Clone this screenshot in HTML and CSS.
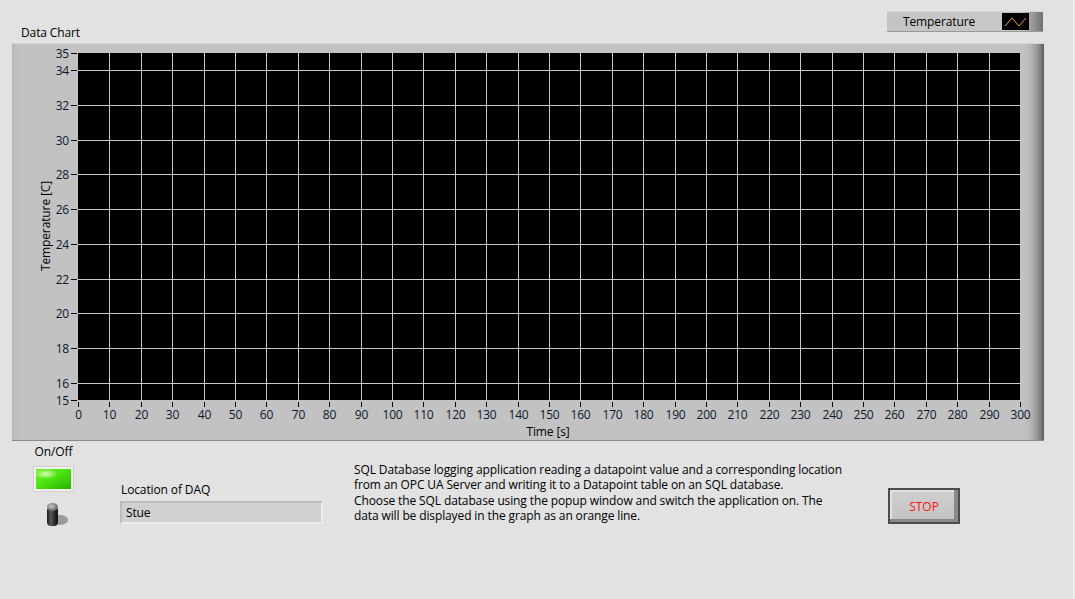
FILE: index.html
```html
<!DOCTYPE html>
<html>
<head>
<meta charset="utf-8">
<link rel="stylesheet" href="styles.css">
</head>
<body>
<div class="panel">
  <div class="top-row">
    <div class="chart-label">Data Chart</div>
    <div class="legend">
      <span class="legend-name">Temperature</span>
      <span class="legend-swatch">
        <svg width="27" height="17" viewBox="0 0 27 17"><polyline points="3,13 10,5 17,13 24,5" fill="none" stroke="#f0a020" stroke-width="1"/></svg>
      </span>
    </div>
  </div>
  <div class="chart-frame">
    <svg class="chart-svg" width="1032" height="398" viewBox="0 0 1032 398">
      <rect x="66" y="9" width="942" height="347" fill="#000"/>
      <g id="grid" stroke="#c8c8c8" stroke-width="1"></g>
      <g id="ticks" stroke="#000" stroke-width="1"></g>
      <g id="ylabels" class="tick-text" text-anchor="end"></g>
      <g id="xlabels" class="tick-text" text-anchor="middle"></g>
      <text class="axis-title" x="536" y="392" text-anchor="middle">Time [s]</text>
      <text class="axis-title" transform="translate(38 182) rotate(-90)" text-anchor="middle">Temperature [C]</text>
    </svg>
  </div>
  <div class="bottom-row">
    <div class="onoff">
      <div class="onoff-label">On/Off</div>
      <div class="led"><div class="led-inner"></div></div>
      <svg class="toggle" width="30" height="28" viewBox="0 0 30 28">
        <defs>
          <linearGradient id="tg" x1="0" x2="1" y1="0" y2="0">
            <stop offset="0" stop-color="#1a1a1a"/>
            <stop offset="0.35" stop-color="#5a5a5a"/>
            <stop offset="0.7" stop-color="#2a2a2a"/>
            <stop offset="1" stop-color="#111"/>
          </linearGradient>
          <radialGradient id="tt" cx="0.4" cy="0.4" r="0.7">
            <stop offset="0" stop-color="#c8c8c8"/>
            <stop offset="1" stop-color="#555"/>
          </radialGradient>
        </defs>
        <ellipse cx="17" cy="19" rx="8" ry="5" fill="#9a9a9a"/>
        <rect x="4" y="6" width="11" height="19" rx="4" fill="url(#tg)"/>
        <ellipse cx="9.5" cy="6" rx="5.5" ry="4" fill="url(#tt)"/>
      </svg>
    </div>
    <div class="location">
      <div class="loc-label">Location of DAQ</div>
      <div class="loc-input">Stue</div>
    </div>
    <p class="description">SQL Database logging application reading a datapoint value and a corresponding location<br>from an OPC UA Server and writing it to a Datapoint table on an SQL database.<br>Choose the SQL database using the popup window and switch the application on. The<br>data will be displayed in the graph as an orange line.</p>
    <button class="stop-btn">STOP</button>
  </div>
</div>
<script src="chart.js"></script>
</body>
</html>
```
FILE: chart.js
```js
(function () {
  var ns = "http://www.w3.org/2000/svg";
  var px = 66, py = 9, pw = 942, ph = 347;
  function yv(v) { return py + (35 - v) * ph / 20; }
  function xv(v) { return px + v * pw / 300; }
  var grid = document.getElementById("grid");
  var ticks = document.getElementById("ticks");
  var yl = document.getElementById("ylabels");
  var xl = document.getElementById("xlabels");
  function line(g, x1, y1, x2, y2) {
    var l = document.createElementNS(ns, "line");
    l.setAttribute("x1", x1); l.setAttribute("y1", y1);
    l.setAttribute("x2", x2); l.setAttribute("y2", y2);
    g.appendChild(l);
  }
  function text(g, x, y, s) {
    var t = document.createElementNS(ns, "text");
    t.setAttribute("x", x); t.setAttribute("y", y);
    t.textContent = s;
    g.appendChild(t);
  }
  var yvals = [35, 34, 32, 30, 28, 26, 24, 22, 20, 18, 16, 15];
  yvals.forEach(function (v) {
    var y = Math.round(yv(v)) + 0.5;
    if (v !== 35 && v !== 15) line(grid, px, y, px + pw, y);
    line(ticks, 59, y, 65, y);
    text(yl, 57, y + 4.5, String(v));
  });
  for (var v = 0; v <= 300; v += 10) {
    var x = Math.round(xv(v)) + 0.5;
    if (v !== 0 && v !== 300) line(grid, x, py, x, py + ph);
    line(ticks, x, 358, x, 363);
    text(xl, x, 375, String(v));
  }
})();
```
FILE: styles.css
```css
html, body {
  margin: 0;
  padding: 0;
}
body {
  background: #e2e2e2;
  font-family: "Open Sans", "Segoe UI", Arial, sans-serif;
  font-size: 12px;
  letter-spacing: -0.12px;
  color: #000;
}
.panel {
  width: 1074px;
  height: 599px;
  border-right: 1px solid #f4f4f4;
  box-sizing: border-box;
  display: flex;
  flex-direction: column;
}
.top-row {
  height: 43px;
  display: flex;
  justify-content: space-between;
  align-items: flex-start;
}
.chart-label {
  margin: 25px 0 0 21px;
  line-height: 16px;
}
.legend {
  margin: 11px 30px 0 0;
  width: 156px;
  height: 21px;
  box-sizing: border-box;
  display: flex;
  align-items: center;
  justify-content: space-between;
  padding: 0 14px 0 16px;
  background: linear-gradient(to right, #c4c4c4 0, #c8c8c8 85%, #a0a0a0 92%, #707070 100%);
  border-top: 1px solid #d8d8d8;
  border-bottom: 1px solid #9a9a9a;
}
.legend-name {
  line-height: 16px;
}
.legend-swatch {
  display: block;
  width: 27px;
  height: 17px;
  background: #000;
}
.legend-swatch svg {
  display: block;
}
.chart-frame {
  margin-left: 12px;
  width: 1032px;
  height: 398px;
  background:
    linear-gradient(to right, #b4b4b4 0, #c0c0c0 4px, #c4c4c4 13px, transparent 13px),
    linear-gradient(to left, #5a5a5a 0, #7c7c7c 3px, #9e9e9e 8px, #b8b8b8 14px, #c2c2c2 20px, transparent 20px),
    #c2c2c2;
  border-top: 1px solid #d4d4d4;
  border-bottom: 1px solid #8a8a8a;
  box-sizing: border-box;
}
.chart-svg {
  display: block;
}
.tick-text {
  font-family: "Open Sans", "Segoe UI", Arial, sans-serif;
  font-size: 12px;
  letter-spacing: -0.2px;
  fill: #0c1830;
}
.axis-title {
  font-family: "Open Sans", "Segoe UI", Arial, sans-serif;
  font-size: 12px;
  fill: #000;
}
.bottom-row {
  display: flex;
  align-items: flex-start;
}
.onoff {
  margin-left: 33px;
  width: 41px;
  display: flex;
  flex-direction: column;
  align-items: center;
}
.onoff-label {
  margin-top: 3px;
  line-height: 16px;
}
.led {
  margin-top: 6px;
  width: 41px;
  height: 26px;
  box-sizing: border-box;
  background: #f2f2f2;
  border: 1px solid #cfcfcf;
  padding: 2px;
}
.led-inner {
  width: 100%;
  height: 100%;
  background:
    radial-gradient(ellipse 12px 5px at 10px 5px, #d8ffb0 0, rgba(200,255,150,0) 100%),
    linear-gradient(to bottom right, #6cf52a 0, #48e010 50%, #28b000 100%);
}
.toggle {
  display: block;
  margin-top: 9px;
  margin-left: 8px;
}
.location {
  margin-left: 46px;
  margin-top: 41px;
}
.loc-label {
  padding-left: 1px;
  line-height: 16px;
}
.loc-input {
  margin-top: 3px;
  width: 203px;
  height: 23px;
  box-sizing: border-box;
  background: #d0d0d0;
  border: 2px solid #ececec;
  border-top-color: #bcbcbc;
  border-left-color: #bcbcbc;
  padding-left: 4px;
  line-height: 19px;
}
.description {
  margin: 21px 0 0 31px;
  width: 500px;
  line-height: 15.4px;
}
.stop-btn {
  margin: 47px 0 0 34px;
  width: 72px;
  height: 36px;
  box-sizing: border-box;
  border: 2px solid #4c4c4c;
  background: linear-gradient(to bottom, #d0d0d0 0, #c2c2c2 100%);
  box-shadow: inset -4px -3px 0 #8a8a8a, inset 2px 2px 0 #e2e2e2;
  color: #ff1010;
  font-family: "Open Sans", "Segoe UI", Arial, sans-serif;
  font-size: 12px;
  padding: 0;
}
```
